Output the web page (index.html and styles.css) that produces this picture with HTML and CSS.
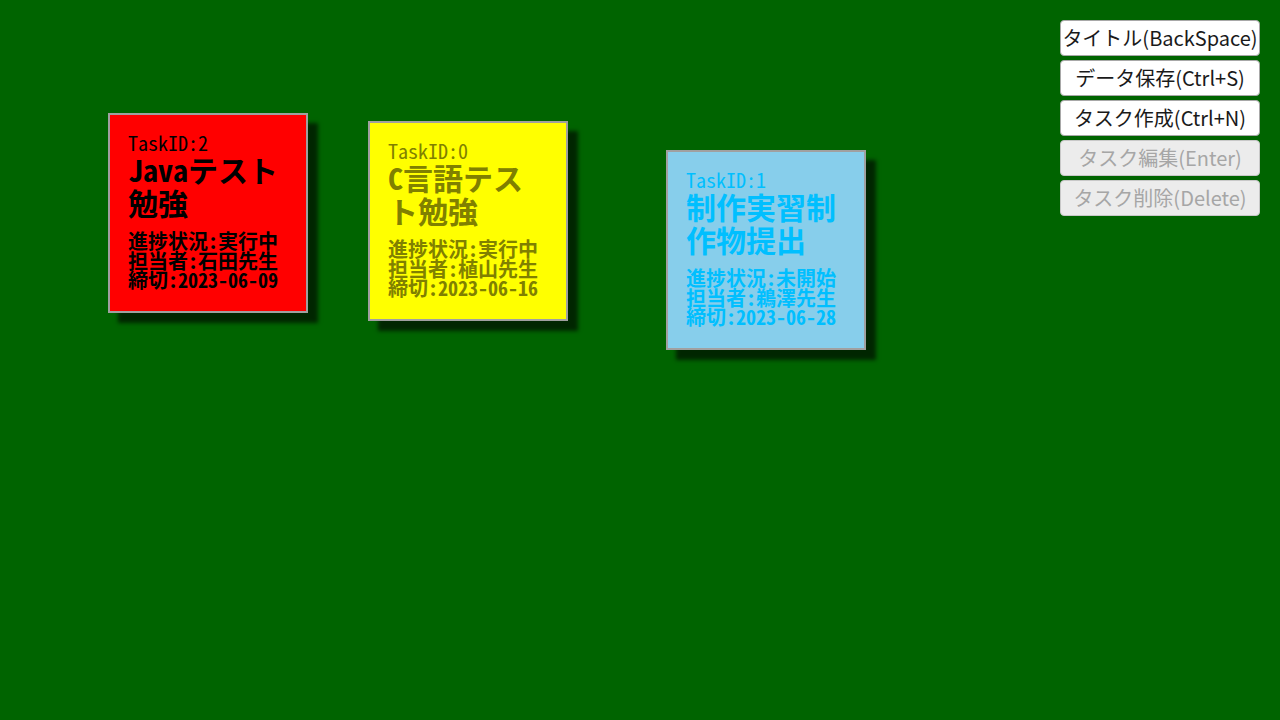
FILE: index.html
```html
<!DOCTYPE html>
<html lang="ja">
<head>
<meta charset="utf-8">
<title>Task Board</title>
<link rel="stylesheet" href="styles.css">
</head>
<body>
<div class="board">
  <div class="note note-red" style="left:108px; top:113px;">
    <div class="note-id">TaskID:2</div>
    <div class="note-title">Javaテスト勉強</div>
    <div class="note-info">
      <div>進捗状況:実行中</div>
      <div>担当者:石田先生</div>
      <div>締切:2023-06-09</div>
    </div>
  </div>
  <div class="note note-yellow" style="left:368px; top:121px;">
    <div class="note-id">TaskID:0</div>
    <div class="note-title">C言語テスト勉強</div>
    <div class="note-info">
      <div>進捗状況:実行中</div>
      <div>担当者:植山先生</div>
      <div>締切:2023-06-16</div>
    </div>
  </div>
  <div class="note note-blue" style="left:666px; top:150px;">
    <div class="note-id">TaskID:1</div>
    <div class="note-title">制作実習制作物提出</div>
    <div class="note-info">
      <div>進捗状況:未開始</div>
      <div>担当者:鵜澤先生</div>
      <div>締切:2023-06-28</div>
    </div>
  </div>
  <div class="toolbar">
    <button class="btn">タイトル(BackSpace)</button>
    <button class="btn">データ保存(Ctrl+S)</button>
    <button class="btn">タスク作成(Ctrl+N)</button>
    <button class="btn" disabled>タスク編集(Enter)</button>
    <button class="btn" disabled>タスク削除(Delete)</button>
  </div>
</div>
</body>
</html>
```
FILE: styles.css
```css
html, body {
  margin: 0;
  padding: 0;
  width: 1280px;
  height: 720px;
  overflow: hidden;
  background: #006400;
}
.board {
  position: relative;
  width: 1280px;
  height: 720px;
  display: flex;
  justify-content: flex-end;
  align-items: flex-start;
}
.note {
  position: absolute;
  box-sizing: border-box;
  width: 200px;
  height: 200px;
  border: 2px solid #a0a0a0;
  padding: 18px 18px 0 18px;
  box-shadow: 10px 10px 4px rgba(0, 0, 0, 0.62);
  font-family: "Noto Sans Mono CJK JP", "Noto Sans CJK JP", monospace;
  font-weight: bold;
}
.note-red { background: #ff0000; color: #000000; }
.note-yellow { background: #ffff00; color: #808000; }
.note-blue { background: #87ceeb; color: #00bfff; }
.note-id {
  font-size: 20px;
  line-height: 20px;
  font-weight: normal;
  height: 20px;
}
.note-title {
  font-size: 30px;
  line-height: 33px;
  width: 160px;
  word-break: break-all;
}
.note-info {
  margin-top: 12px;
  font-size: 20px;
  line-height: 19.5px;
  white-space: nowrap;
}
.toolbar {
  display: flex;
  flex-direction: column;
  gap: 4px;
  padding: 20px 20px 0 0;
}
.btn {
  box-sizing: border-box;
  width: 200px;
  height: 36px;
  padding: 0;
  margin: 0;
  background: #ffffff;
  border: 1px solid #a8a8a8;
  border-radius: 4px;
  color: #1a1a1a;
  font-family: "Noto Sans CJK JP", "Noto Sans", sans-serif;
  font-size: 20px;
  line-height: 34px;
  white-space: nowrap;
}
.btn:disabled {
  background: #ececec;
  border-color: #c8c8c8;
  color: #a6a6a6;
}
```
